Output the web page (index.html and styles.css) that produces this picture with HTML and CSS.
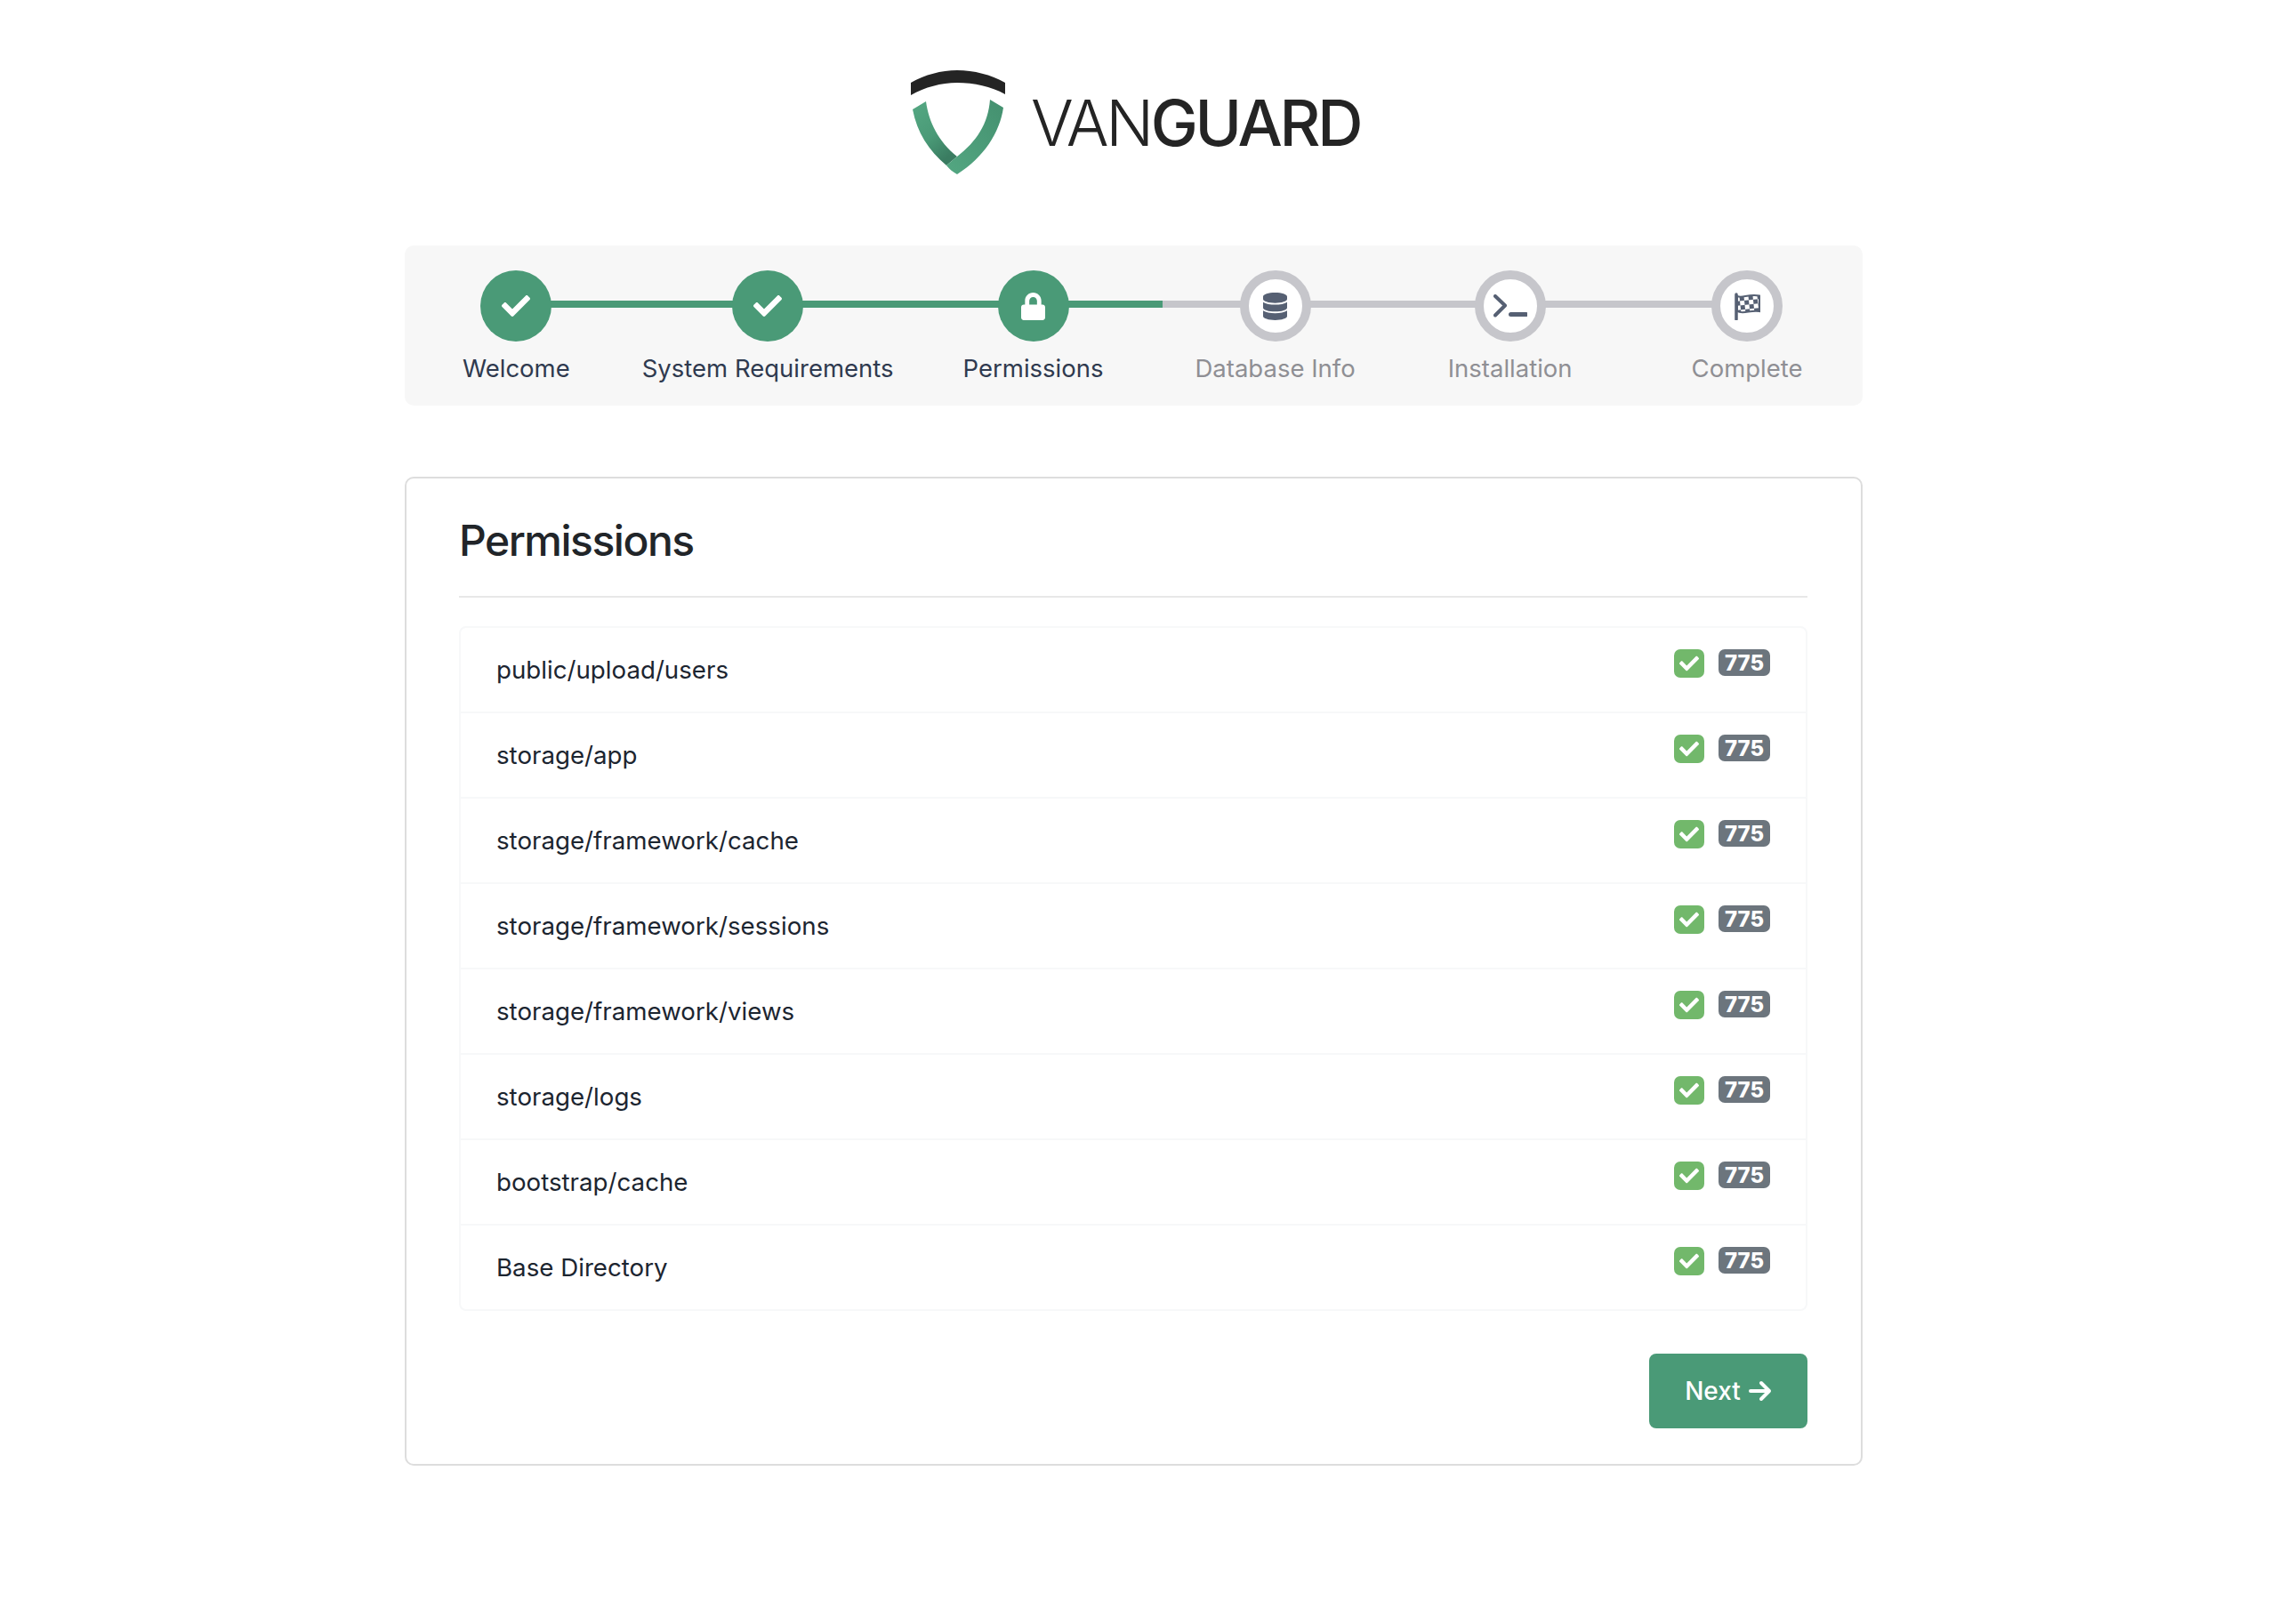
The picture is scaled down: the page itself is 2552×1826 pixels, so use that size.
FILE: index.html
```html
<!DOCTYPE html>
<html lang="en">
<head>
  <meta charset="UTF-8" />
  <title>Vanguard Installation</title>
  <link rel="stylesheet" href="styles.css">
</head>
<body>
  <svg class="icon-defs" width="0" height="0">
    <symbol id="check" viewBox="0 0 512 512">
      <path d="M173.898 439.404l-166.4-166.4c-9.997-9.997-9.997-26.206 0-36.204l36.203-36.204c9.997-9.998 26.207-9.998 36.204 0L192 312.69 432.095 72.596c9.997-9.997 26.207-9.997 36.204 0l36.203 36.204c9.997 9.997 9.997 26.206 0 36.204l-294.4 294.401c-9.998 9.997-26.207 9.997-36.204-.001z"/>
    </symbol>
    <pattern id="checker" width="10" height="10" patternUnits="userSpaceOnUse" patternTransform="rotate(-6)">
      <rect width="5" height="5" fill="#566073"/>
      <rect x="5" y="5" width="5" height="5" fill="#566073"/>
    </pattern>
    <linearGradient id="shield-left" x1="0" y1="0" x2="0.55" y2="1">
      <stop offset="0" stop-color="#55a883"/>
      <stop offset="0.6" stop-color="#4a9a77"/>
      <stop offset="1" stop-color="#3a7c61"/>
    </linearGradient>
    <linearGradient id="shield-right" x1="1" y1="0" x2="0.2" y2="1">
      <stop offset="0" stop-color="#44906f"/>
      <stop offset="1" stop-color="#52a580"/>
    </linearGradient>
  </svg>

  <div class="page">
    <header class="logo">
      <svg class="logo-mark" viewBox="0 0 106 117" width="106" height="117">
        <path fill="#242424" d="M0 14C16 5 34 0 52 0C71 0 90 5 106 14V27C90 18 71 14 52 14C34 14 16 19 0 28Z"/>
        <path fill="url(#shield-left)" d="M2 44L17 35C20 58 31 80 52 97L40 107C20 90 7 70 2 44Z"/>
        <path fill="url(#shield-right)" d="M89 33L104 42C100 70 82 98 52 117C47 114 43 111 40 107L52 97C74 80 87 60 89 33Z"/>
      </svg>
      <span class="logo-text"><span class="logo-light">VAN</span><span class="logo-bold">GUARD</span></span>
    </header>

    <nav class="stepper">
      <div class="track"><div class="track-fill" style="width: 52.5%"></div></div>

      <div class="step done">
        <span class="step-circle">
          <svg class="step-icon" width="32" height="32" fill="#fff"><use href="#check"/></svg>
        </span>
        <span class="step-label">Welcome</span>
      </div>
      <div class="step done">
        <span class="step-circle">
          <svg class="step-icon" width="32" height="32" fill="#fff"><use href="#check"/></svg>
        </span>
        <span class="step-label">System Requirements</span>
      </div>
      <div class="step done step-permissions">
        <span class="step-circle">
          <svg class="step-icon" viewBox="0 0 448 512" width="27" height="31" fill="#fff">
            <path d="M400 224h-24v-72C376 68.2 307.8 0 224 0S72 68.2 72 152v72H48c-26.5 0-48 21.5-48 48v192c0 26.5 21.5 48 48 48h352c26.5 0 48-21.5 48-48V272c0-26.5-21.5-48-48-48zm-104 0H152v-72c0-39.7 32.3-72 72-72s72 32.3 72 72v72z"/>
          </svg>
        </span>
        <span class="step-label">Permissions</span>
      </div>
      <div class="step pending step-database">
        <span class="step-circle">
          <svg class="step-icon" viewBox="0 0 448 512" width="27" height="31" fill="#566073">
            <path d="M448 73.143v45.714C448 159.143 347.667 192 224 192S0 159.143 0 118.857V73.143C0 32.857 100.333 0 224 0s224 32.857 224 73.143zM448 176v102.857C448 319.143 347.667 352 224 352S0 319.143 0 278.857V176c48.125 33.143 136.208 48.572 224 48.572S399.874 209.143 448 176zm0 160v102.857C448 479.143 347.667 512 224 512S0 479.143 0 438.857V336c48.125 33.143 136.208 48.572 224 48.572S399.874 369.143 448 336z"/>
          </svg>
        </span>
        <span class="step-label">Database Info</span>
      </div>
      <div class="step pending step-install">
        <span class="step-circle">
          <svg class="step-icon" viewBox="0 0 38 26" width="38" height="26" fill="none" stroke="#566073">
            <path d="M2 2L13 12.5L2 23.5" stroke-width="4" stroke-linecap="round" stroke-linejoin="round"/>
            <path d="M19.5 22.5H36.5" stroke-width="5" stroke-linecap="round"/>
          </svg>
        </span>
        <span class="step-label">Installation</span>
      </div>
      <div class="step pending step-complete">
        <span class="step-circle">
          <svg class="step-icon" viewBox="0 0 29 31" width="29" height="31">
            <path d="M2 2V30" stroke="#566073" stroke-width="3.5" stroke-linecap="round"/>
            <path d="M3 4C9 7 15 1 28 3.5V21C18 19 10 25 3 21Z" fill="#fff" stroke="#566073" stroke-width="2"/>
            <path d="M3 4C9 7 15 1 28 3.5V21C18 19 10 25 3 21Z" fill="url(#checker)"/>
          </svg>
        </span>
        <span class="step-label">Complete</span>
      </div>
    </nav>

    <main class="card">
      <h1 class="card-title">Permissions</h1>

      <ul class="perm-list">
        <li class="perm-row">
          <span>public/upload/users</span>
          <span class="perm-status">
            <span class="check-box"><svg width="22" height="22" fill="#fff"><use href="#check"/></svg></span>
            <span class="badge">775</span>
          </span>
        </li>
        <li class="perm-row">
          <span>storage/app</span>
          <span class="perm-status">
            <span class="check-box"><svg width="22" height="22" fill="#fff"><use href="#check"/></svg></span>
            <span class="badge">775</span>
          </span>
        </li>
        <li class="perm-row">
          <span>storage/framework/cache</span>
          <span class="perm-status">
            <span class="check-box"><svg width="22" height="22" fill="#fff"><use href="#check"/></svg></span>
            <span class="badge">775</span>
          </span>
        </li>
        <li class="perm-row">
          <span>storage/framework/sessions</span>
          <span class="perm-status">
            <span class="check-box"><svg width="22" height="22" fill="#fff"><use href="#check"/></svg></span>
            <span class="badge">775</span>
          </span>
        </li>
        <li class="perm-row">
          <span>storage/framework/views</span>
          <span class="perm-status">
            <span class="check-box"><svg width="22" height="22" fill="#fff"><use href="#check"/></svg></span>
            <span class="badge">775</span>
          </span>
        </li>
        <li class="perm-row">
          <span>storage/logs</span>
          <span class="perm-status">
            <span class="check-box"><svg width="22" height="22" fill="#fff"><use href="#check"/></svg></span>
            <span class="badge">775</span>
          </span>
        </li>
        <li class="perm-row">
          <span>bootstrap/cache</span>
          <span class="perm-status">
            <span class="check-box"><svg width="22" height="22" fill="#fff"><use href="#check"/></svg></span>
            <span class="badge">775</span>
          </span>
        </li>
        <li class="perm-row">
          <span>Base Directory</span>
          <span class="perm-status">
            <span class="check-box"><svg width="22" height="22" fill="#fff"><use href="#check"/></svg></span>
            <span class="badge">775</span>
          </span>
        </li>
      </ul>

      <div class="card-actions">
        <a class="btn-next" href="#">Next
          <svg viewBox="0 0 26 24" width="26" height="24" fill="none" stroke="#fff" stroke-width="4" stroke-linecap="round" stroke-linejoin="round">
            <path d="M2 12H23M14 3L23 12L14 21"/>
          </svg>
        </a>
      </div>
    </main>
  </div>
</body>
</html>
```

FILE: styles.css
```css
body {
  margin: 0;
  background: #fff;
  font-family: Inter, "Liberation Sans", sans-serif;
  color: #212529;
}
.icon-defs {
  position: absolute;
}
.page {
  width: 1639px;
  margin-left: 455px;
  height: 1826px;
}
.logo {
  display: flex;
  align-items: flex-start;
  padding: 79px 0 0 569px;
  height: 276px;
  box-sizing: border-box;
}
.logo-text {
  margin: 16px 0 0 29px;
  font-size: 71px;
  line-height: 86px;
  letter-spacing: -3.3px;
  color: #242424;
}
.logo-light {
  font-weight: 300;
}
.logo-bold {
  font-weight: 500;
}

.stepper {
  position: relative;
  display: flex;
  height: 180px;
  box-sizing: border-box;
  padding: 28px 65px 0;
  gap: 81px;
  background: #f7f7f7;
  border-radius: 10px;
}
.track {
  position: absolute;
  left: 125px;
  right: 130px;
  top: 62px;
  height: 8px;
  background: #c6c6cb;
}
.track-fill {
  height: 100%;
  background: #4a9a77;
}
.step {
  position: relative;
  display: flex;
  flex-direction: column;
  align-items: center;
}
.step-permissions {
  margin-left: -3px;
}
.step-database {
  margin-left: 22px;
}
.step-install {
  margin-left: 23px;
}
.step-complete {
  margin-left: 53px;
}
.step-circle {
  display: flex;
  align-items: center;
  justify-content: center;
  width: 80px;
  height: 80px;
  box-sizing: border-box;
  border-radius: 50%;
}
.done .step-circle {
  background: #4a9a77;
}
.pending .step-circle {
  background: #fff;
  border: 10px solid #c6c6cb;
}
.step-label {
  margin-top: 12px;
  font-size: 27.5px;
  line-height: 36px;
  white-space: nowrap;
}
.done .step-label {
  color: #2f3a4f;
}
.pending .step-label {
  color: #8f8f94;
}

.card {
  box-sizing: border-box;
  height: 1112px;
  margin-top: 80px;
  padding: 41px 60px 0 59px;
  border: 2px solid #ddd;
  border-radius: 10px;
}
.card-title {
  margin: 0;
  padding-bottom: 33px;
  font-size: 48px;
  line-height: 58px;
  font-weight: 500;
  letter-spacing: -1.5px;
  border-bottom: 2px solid #e8e8e8;
}
.perm-list {
  list-style: none;
  margin: 32px 0 0;
  padding: 0;
  border: 2px solid #f7f8f9;
  border-radius: 8px;
}
.perm-row {
  display: flex;
  justify-content: space-between;
  height: 96px;
  box-sizing: border-box;
  padding: 24px 40px 0;
  font-size: 27.7px;
  line-height: 46px;
  color: #1c2530;
  border-bottom: 2px solid #f7f8f9;
}
.perm-row:last-child {
  border-bottom: 0;
  height: 94px;
}
.perm-status {
  display: flex;
  align-items: flex-start;
  gap: 16px;
}
.check-box {
  display: flex;
  align-items: center;
  justify-content: center;
  width: 34px;
  height: 32px;
  background: #72b86b;
  border-radius: 7px;
}
.badge {
  width: 58px;
  height: 30px;
  background: #6c757d;
  border-radius: 7px;
  color: #fff;
  font-size: 24px;
  font-weight: 800;
  line-height: 31px;
  text-align: center;
}
.card-actions {
  display: flex;
  justify-content: flex-end;
  margin-top: 48px;
}
.btn-next {
  display: flex;
  align-items: center;
  justify-content: center;
  gap: 9px;
  width: 178px;
  height: 84px;
  background: #4a9a77;
  border-radius: 8px;
  color: #fff;
  font-size: 28px;
  font-weight: 500;
  text-decoration: none;
}
```
